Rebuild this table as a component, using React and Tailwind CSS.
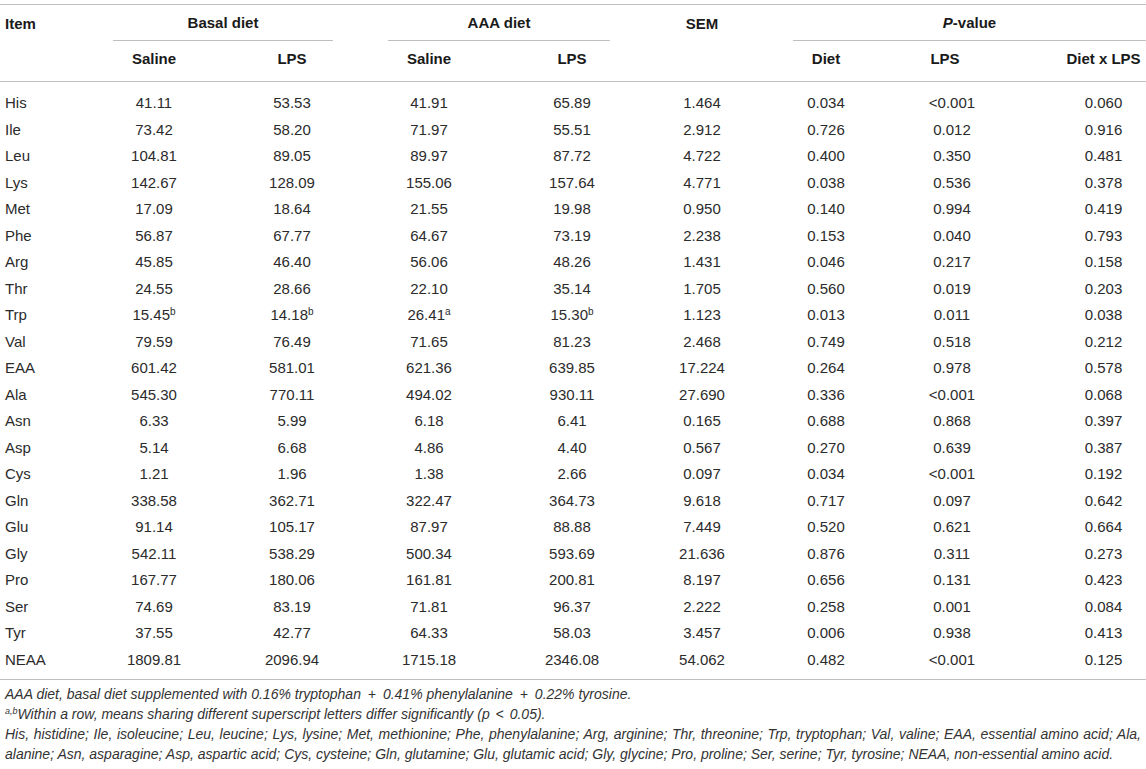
import React from 'react';

const rows = [
    ['His', '41.11', '53.53', '41.91', '65.89', '1.464', '0.034', '<0.001', '0.060'],
    ['Ile', '73.42', '58.20', '71.97', '55.51', '2.912', '0.726', '0.012', '0.916'],
    ['Leu', '104.81', '89.05', '89.97', '87.72', '4.722', '0.400', '0.350', '0.481'],
    ['Lys', '142.67', '128.09', '155.06', '157.64', '4.771', '0.038', '0.536', '0.378'],
    ['Met', '17.09', '18.64', '21.55', '19.98', '0.950', '0.140', '0.994', '0.419'],
    ['Phe', '56.87', '67.77', '64.67', '73.19', '2.238', '0.153', '0.040', '0.793'],
    ['Arg', '45.85', '46.40', '56.06', '48.26', '1.431', '0.046', '0.217', '0.158'],
    ['Thr', '24.55', '28.66', '22.10', '35.14', '1.705', '0.560', '0.019', '0.203'],
    ['Trp', '15.45^b', '14.18^b', '26.41^a', '15.30^b', '1.123', '0.013', '0.011', '0.038'],
    ['Val', '79.59', '76.49', '71.65', '81.23', '2.468', '0.749', '0.518', '0.212'],
    ['EAA', '601.42', '581.01', '621.36', '639.85', '17.224', '0.264', '0.978', '0.578'],
    ['Ala', '545.30', '770.11', '494.02', '930.11', '27.690', '0.336', '<0.001', '0.068'],
    ['Asn', '6.33', '5.99', '6.18', '6.41', '0.165', '0.688', '0.868', '0.397'],
    ['Asp', '5.14', '6.68', '4.86', '4.40', '0.567', '0.270', '0.639', '0.387'],
    ['Cys', '1.21', '1.96', '1.38', '2.66', '0.097', '0.034', '<0.001', '0.192'],
    ['Gln', '338.58', '362.71', '322.47', '364.73', '9.618', '0.717', '0.097', '0.642'],
    ['Glu', '91.14', '105.17', '87.97', '88.88', '7.449', '0.520', '0.621', '0.664'],
    ['Gly', '542.11', '538.29', '500.34', '593.69', '21.636', '0.876', '0.311', '0.273'],
    ['Pro', '167.77', '180.06', '161.81', '200.81', '8.197', '0.656', '0.131', '0.423'],
    ['Ser', '74.69', '83.19', '71.81', '96.37', '2.222', '0.258', '0.001', '0.084'],
    ['Tyr', '37.55', '42.77', '64.33', '58.03', '3.457', '0.006', '0.938', '0.413'],
    ['NEAA', '1809.81', '2096.94', '1715.18', '2346.08', '54.062', '0.482', '<0.001', '0.125'],
];

const cols = 'grid grid-cols-[85px_138px_138px_136px_150px_110px_138px_114px_137px]';

// value with optional superscript letter, written as "15.45^b"
const Cell = ({ value }) => {
    const [num, sup] = value.split('^');
    return (
        <span>
            {num}
            {sup && <span className="relative -top-[5px] text-[10px] leading-none">{sup}</span>}
        </span>
    );
};

const App = () => {
    return (
        <div className="w-[1146px] h-[769px] bg-white pt-1 text-[15px] text-[#2b2b2b] font-['Liberation_Sans',Arial,sans-serif] overflow-hidden">
            {/* Header */}
            <div className="border-t border-[#bfbfbf] font-bold text-[#1a1a1a]">
                <div className={`${cols} h-9 items-center`}>
                    <div className="pl-[5px] pt-[2px]">Item</div>
                    <div className="col-span-2 h-full flex flex-col">
                        <div className="mx-[28px] h-full pt-[2px] flex items-center justify-center border-b border-[#bfbfbf]">Basal diet</div>
                    </div>
                    <div className="col-span-2 h-full flex flex-col">
                        <div className="ml-[27px] mr-[37px] h-full pt-[2px] flex items-center justify-center border-b border-[#bfbfbf]">AAA diet</div>
                    </div>
                    <div className="text-center pt-[2px]">SEM</div>
                    <div className="col-span-3 h-full flex flex-col">
                        <div className="ml-[36px] h-full pt-[2px] flex items-center justify-center border-b border-[#bfbfbf]">
                            <span><i>P</i>-value</span>
                        </div>
                    </div>
                </div>
                <div className={`${cols} h-[41px] pb-1 items-center border-b border-[#bfbfbf]`}>
                    <div />
                    <div className="text-center">Saline</div>
                    <div className="text-center">LPS</div>
                    <div className="text-center">Saline</div>
                    <div className="text-center">LPS</div>
                    <div />
                    <div className="text-center">Diet</div>
                    <div className="text-center pr-[14px]">LPS</div>
                    <div className="text-center pl-[52px]">Diet x LPS</div>
                </div>
            </div>

            {/* Body */}
            <div className="pt-2 pb-[6px] border-b border-[#bfbfbf]">
                {rows.map((row) => (
                    <div key={row[0]} className={`${cols} h-[26.5px] items-center`}>
                        <div className="pl-[5px]">{row[0]}</div>
                        {row.slice(1, 8).map((v, i) => (
                            <div key={i} className="text-center">
                                <Cell value={v} />
                            </div>
                        ))}
                        <div className="text-center pl-[52px]">{row[8]}</div>
                    </div>
                ))}
            </div>

            {/* Footnotes */}
            <div className="pt-1 pl-[5px] pr-[5px] text-[14px] leading-[20px] italic text-[#333]">
                <p>
                    AAA diet, basal diet supplemented with 0.16% tryptophan <span className="mx-[3px]">+</span> 0.41% phenylalanine{' '}
                    <span className="mx-[3px]">+</span> 0.22% tyrosine.
                </p>
                <p>
                    <span className="relative -top-[5px] text-[9px] leading-none">a,b</span>Within a row, means sharing different superscript letters differ significantly (p <span className="mx-[2px]">&lt;</span> 0.05).
                </p>
                <p className="text-justify">
                    His, histidine; Ile, isoleucine; Leu, leucine; Lys, lysine; Met, methionine; Phe, phenylalanine; Arg, arginine; Thr, threonine; Trp, tryptophan; Val, valine; EAA, essential amino acid; Ala, alanine; Asn, asparagine; Asp, aspartic acid; Cys, cysteine; Gln, glutamine; Glu, glutamic acid; Gly, glycine; Pro, proline; Ser, serine; Tyr, tyrosine; NEAA, non-essential amino acid.
                </p>
            </div>
        </div>
    );
};

export default App;
